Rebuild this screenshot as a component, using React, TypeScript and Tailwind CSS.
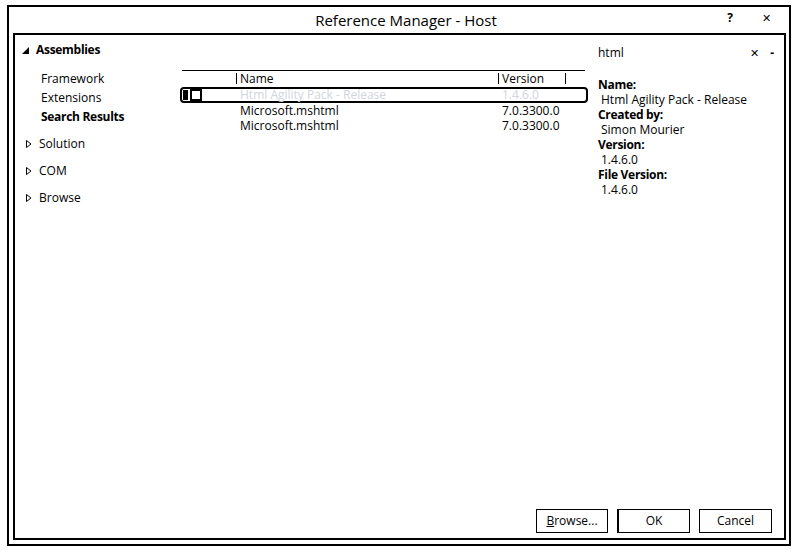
import React from "react";

const font = { fontFamily: '"Open Sans", "Noto Sans", sans-serif' };

const NavItem: React.FC<{ label: string; bold?: boolean }> = ({ label, bold }) => (
  <div className={bold ? "h-[19px] leading-[19px] font-bold tracking-[-0.3px]" : "h-[19px] leading-[19px]"}>{label}</div>
);

const Collapsed: React.FC<{ label: string }> = ({ label }) => (
  <div className="flex items-center h-[27px]">
    <svg width="6" height="8" viewBox="0 0 6 8" className="ml-[11px] mr-[7px]">
      <path d="M0.5 0.5 L5 4 L0.5 7.5 Z" fill="white" stroke="black" strokeWidth="1" />
    </svg>
    <span>{label}</span>
  </div>
);

const Row: React.FC<{ name: string; version: string }> = ({ name, version }) => (
  <div className="flex h-[15px] leading-[15px]">
    <div className="w-[60px]" />
    <div className="w-[262px]">{name}</div>
    <div>{version}</div>
  </div>
);

export default function App() {
  return (
    <div className="w-[797px] h-[549px] bg-white text-black text-[12px] pt-[5px] pl-[7px]" style={font}>
      <div className="w-[784px] h-[541px] border-2 border-black flex flex-col">
        {/* title bar */}
        <div className="h-[26px] flex items-center relative">
          <div className="flex-1 text-center text-[15px] pl-[14px]">Reference Manager - Host</div>
          <div className="absolute right-[56px] top-[2px] text-[12px] font-bold">?</div>
          <div className="absolute right-[18px] top-[3px] text-[11px]">✕</div>
        </div>

        {/* inner panel */}
        <div className="ml-[4px] mr-[3px] mb-[4px] flex-1 border-2 border-black flex flex-col">
          <div className="flex flex-1">
            {/* left nav */}
            <div className="w-[165px] pt-[6px]">
              <div className="flex items-center h-[18px] font-bold tracking-[-0.3px]">
                <svg width="7" height="7" viewBox="0 0 7 7" className="ml-[7px] mr-[7px]">
                  <path d="M7 0 L7 7 L0 7 Z" fill="black" />
                </svg>
                Assemblies
              </div>
              <div className="pl-[26px] pt-[10px]">
                <NavItem label="Framework" />
                <NavItem label="Extensions" />
                <NavItem label="Search Results" bold />
              </div>
              <div className="pt-[4px]">
                <Collapsed label="Solution" />
                <Collapsed label="COM" />
                <Collapsed label="Browse" />
              </div>
            </div>

            {/* middle + right */}
            <div className="flex-1 flex flex-col">
              <div className="h-[35px] flex">
                <div className="w-[418px]" />
                <div className="flex-1 flex items-center pt-[1px]">
                  <span className="flex-1">html</span>
                  <span className="text-[11px] mr-[11px]">✕</span>
                  <span className="mr-[10px] font-bold">-</span>
                </div>
              </div>
              <div className="flex flex-1">
                {/* table */}
                <div className="w-[410px]">
                  <div className="ml-[2px] w-[403px] border-t border-black h-[16px] flex items-center">
                    <div className="w-[54px]" />
                    <div className="w-[262px] h-[11px] border-l border-black pl-[3px] flex items-center leading-none">Name</div>
                    <div className="w-[67px] h-[11px] border-l border-black pl-[3px] flex items-center leading-none">Version</div>
                    <div className="h-[11px] border-l border-black" />
                  </div>
                  <div className="mt-[1px] w-[408px] h-[16px] border-2 border-black rounded-[4px] flex items-center text-gray-300">
                    <div className="w-[5px] h-[10px] bg-black ml-[1px]" />
                    <div className="w-[12px] h-[12px] border-2 border-black ml-[2px]" />
                    <div className="w-[38px]" />
                    <div className="w-[262px] leading-none">Html Agility Pack - Release</div>
                    <div className="leading-none">1.4.6.0</div>
                  </div>
                  <div>
                    <Row name="Microsoft.mshtml" version="7.0.3300.0" />
                    <Row name="Microsoft.mshtml" version="7.0.3300.0" />
                  </div>
                </div>
                {/* details */}
                <div className="flex-1 pl-[8px] pt-[7px] leading-[15px]">
                  <div className="font-bold tracking-[-0.3px]">Name:</div>
                  <div className="pl-[3px]">Html Agility Pack - Release</div>
                  <div className="font-bold tracking-[-0.3px]">Created by:</div>
                  <div className="pl-[3px]">Simon Mourier</div>
                  <div className="font-bold tracking-[-0.3px]">Version:</div>
                  <div className="pl-[3px]">1.4.6.0</div>
                  <div className="font-bold tracking-[-0.3px]">File Version:</div>
                  <div className="pl-[3px]">1.4.6.0</div>
                </div>
              </div>
            </div>
          </div>

          {/* buttons */}
          <div className="flex justify-end gap-[9px] pr-[12px] pb-[5px]">
            <button className="w-[72px] h-[24px] border border-black bg-white">
              <span className="underline">B</span>rowse...
            </button>
            <button className="w-[73px] h-[24px] border border-black border-l-2 bg-white">OK</button>
            <button className="w-[73px] h-[24px] border border-black bg-white">Cancel</button>
          </div>
        </div>
      </div>
    </div>
  );
}
